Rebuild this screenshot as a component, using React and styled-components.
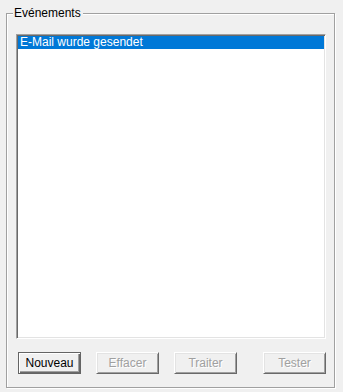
import React from "react";
import styled, { createGlobalStyle } from "styled-components";

const GlobalStyle = createGlobalStyle`
  html, body {
    margin: 0;
    padding: 0;
    background: #f0f0f0;
  }
  body {
    width: 343px;
    height: 392px;
    overflow: hidden;
    font-family: "Liberation Sans", Arial, sans-serif;
    font-size: 12px;
  }
`;

const Page = styled.div`
  padding: 13px 0 0 6px;
`;

const GroupBox = styled.div`
  position: relative;
  width: 327px;
  height: 373px;
  border: 1px solid #a0a0a0;
  box-shadow: inset 1px 1px 0 #fff, 1px 1px 0 #fff;
  padding: 20px 8px 0 9px;
  box-sizing: border-box;
  width: 329px;
  height: 375px;
  display: flex;
  flex-direction: column;
`;

const Legend = styled.span`
  position: absolute;
  top: -8px;
  left: 6px;
  padding: 0 2px 0 1px;
  background: #f0f0f0;
  color: #000;
  line-height: 14px;
`;

const List = styled.div`
  width: 310px;
  height: 305px;
  box-sizing: border-box;
  background: #fff;
  border: 1px solid;
  border-color: #a0a0a0 #fff #fff #a0a0a0;
  box-shadow: inset 1px 1px 0 #696969, inset -1px -1px 0 #e3e3e3;
  padding: 1px;
`;

const Item = styled.div`
  height: 13px;
  line-height: 13px;
  padding-left: 2px;
  background: ${(p) => (p.selected ? "#0078d7" : "transparent")};
  color: ${(p) => (p.selected ? "#fff" : "#000")};
  white-space: nowrap;
`;

const ButtonRow = styled.div`
  display: flex;
  gap: 15px;
  margin-top: 13px;
  padding-left: 2px;
  width: 310px;
  box-sizing: border-box;
`;

const Button = styled.button`
  width: 63px;
  height: 22px;
  padding: 0;
  box-sizing: border-box;
  font-family: "Liberation Sans", Arial, sans-serif;
  font-size: 12px;
  background: #f0f0f0;
  border: 1px solid;
  border-radius: 0;
  border-color: ${(p) => (p.primary ? "#646464" : "#fff #696969 #696969 #fff")};
  box-shadow: ${(p) =>
    p.primary
      ? "inset 1px 1px 0 #fff, inset -1px -1px 0 #696969, inset -2px -2px 0 #a0a0a0"
      : "inset 1px 1px 0 #e3e3e3, inset -1px -1px 0 #a0a0a0"};
  color: ${(p) => (p.disabled ? "#a0a0a0" : "#000")};
  text-shadow: ${(p) => (p.disabled ? "1px 1px 0 #fff" : "none")};
  margin-left: ${(p) => (p.right ? "auto" : "0")};
`;

export default function App() {
  return (
    <>
      <GlobalStyle />
      <Page>
        <GroupBox>
          <Legend>Evénements</Legend>
          <List>
            <Item selected>E-Mail wurde gesendet</Item>
          </List>
          <ButtonRow>
            <Button primary>Nouveau</Button>
            <Button disabled>Effacer</Button>
            <Button disabled>Traiter</Button>
            <Button disabled right>Tester</Button>
          </ButtonRow>
        </GroupBox>
      </Page>
    </>
  );
}
